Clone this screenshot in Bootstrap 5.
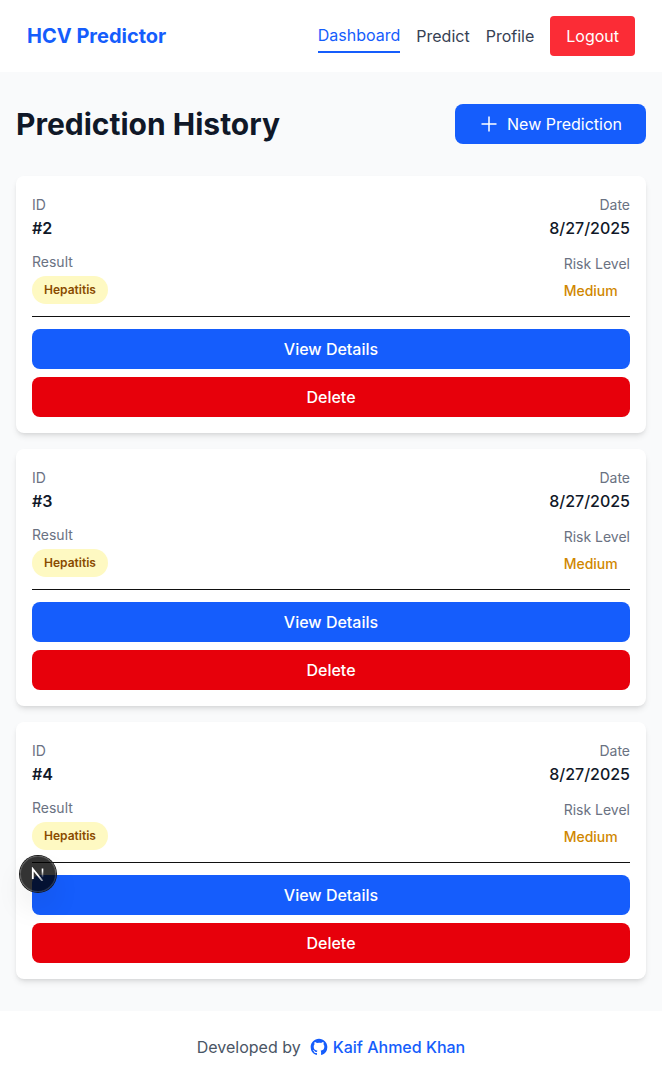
<!DOCTYPE html>
<html lang="en">
<head>
<meta charset="utf-8">
<meta name="viewport" content="width=device-width, initial-scale=1">
<title>HCV Predictor</title>
<link href="https://cdn.jsdelivr.net/npm/bootstrap@5.3.0/dist/css/bootstrap.min.css" rel="stylesheet">
<style>
  :root { --blue: #155dfc; --ink: #101828; --muted: #6a7282; --page: #f9fafb; }
  body { font-family: Inter, "Liberation Sans", sans-serif; font-size: 16px; line-height: 24px; color: var(--ink); background: var(--page); }
  .site-nav { padding: 16px 27px; }
  .brand { font-size: 20px; line-height: 28px; font-weight: 700; color: var(--blue); text-decoration: none; }
  .site-nav .nav-link { padding: 0; color: #364153; }
  .site-nav .nav-link.active { padding: 4px 0; color: var(--blue); border-bottom: 2px solid var(--blue); }
  .btn { --bs-btn-font-size: 16px; --bs-btn-line-height: 24px; --bs-btn-padding-y: 8px; --bs-btn-padding-x: 16px; --bs-btn-color: #fff; --bs-btn-hover-color: #fff; --bs-btn-border-radius: 8px; border: 0; }
  .btn-logout { --bs-btn-bg: #fb2c36; --bs-btn-hover-bg: #e7000b; --bs-btn-border-radius: 4px; }
  .btn-blue { --bs-btn-bg: #155dfc; --bs-btn-hover-bg: #1447e6; }
  .btn-red { --bs-btn-bg: #e7000b; --bs-btn-hover-bg: #c10007; }
  .btn-new { --bs-btn-padding-x: 24px; }
  .card .btn { font-weight: 500; }
  .page-title { font-size: 30px; line-height: 36px; font-weight: 700; }
  .page-main { padding: 32px 16px; }
  .card { border: 0; border-radius: 8px; box-shadow: 0 4px 6px -1px rgba(0,0,0,.1), 0 2px 4px -2px rgba(0,0,0,.1); color: var(--ink); }
  .stack-12 { gap: 12px; }
  .field-label { font-size: 14px; line-height: 20px; color: var(--muted); }
  .result-pill { font-size: 12px; line-height: 20px; font-weight: 600; padding: 4px 12px; background: #fef9c2; color: #894b00; }
  .risk { font-size: 14px; line-height: 20px; font-weight: 500; color: #d08700; }
  .card-actions { border-top: 1px solid #111; padding-top: 12px; }
  .site-footer { padding: 24px 16px; color: #4a5565; }
  .site-footer a { color: var(--blue); font-weight: 500; text-decoration: none; }
  .dev-badge { left: 20px; bottom: 119px; width: 36px; height: 36px; padding: 0; border: 0; color: #fff; background: rgba(0,0,0,.8);
    box-shadow: 0 0 0 1px #171717, inset 0 0 0 1px rgba(255,255,255,.14), 0 16px 32px -8px rgba(0,0,0,.24); }
</style>
</head>
<body>
<header class="bg-white">
  <nav class="site-nav d-flex align-items-center justify-content-between">
    <a class="brand" href="#">HCV Predictor</a>
    <div class="d-flex align-items-center gap-3">
      <a class="nav-link active" href="#" aria-current="page">Dashboard</a>
      <a class="nav-link" href="#">Predict</a>
      <a class="nav-link" href="#">Profile</a>
      <button type="button" class="btn btn-logout">Logout</button>
    </div>
  </nav>
</header>

<main class="page-main position-relative">
  <div class="d-flex align-items-center justify-content-between mb-4 pb-2">
    <h1 class="page-title mb-0">Prediction History</h1>
    <button type="button" class="btn btn-blue btn-new d-flex align-items-center gap-2">
      <svg width="20" height="20" viewBox="0 0 20 20" fill="none" stroke="currentColor" stroke-width="1.5" aria-hidden="true"><path d="M10 2.5v15M2.5 10h15"/></svg>
      New Prediction
    </button>
  </div>

  <div class="d-flex flex-column gap-3">
    <article class="card p-3 stack-12">
      <div class="d-flex justify-content-between">
        <div><div><span class="field-label">ID</span></div><div class="fw-semibold">#2</div></div>
        <div class="text-end"><div><span class="field-label">Date</span></div><div class="fw-medium">8/27/2025</div></div>
      </div>
      <div class="d-flex justify-content-between align-items-center">
        <div><div class="field-label mb-1">Result</div><div class="result-pill rounded-pill">Hepatitis</div></div>
        <div><div class="field-label mb-1">Risk Level</div><div><span class="risk">Medium</span></div></div>
      </div>
      <div class="card-actions d-grid gap-2">
        <button type="button" class="btn btn-blue">View Details</button>
        <button type="button" class="btn btn-red">Delete</button>
      </div>
    </article>

    <article class="card p-3 stack-12">
      <div class="d-flex justify-content-between">
        <div><div><span class="field-label">ID</span></div><div class="fw-semibold">#3</div></div>
        <div class="text-end"><div><span class="field-label">Date</span></div><div class="fw-medium">8/27/2025</div></div>
      </div>
      <div class="d-flex justify-content-between align-items-center">
        <div><div class="field-label mb-1">Result</div><div class="result-pill rounded-pill">Hepatitis</div></div>
        <div><div class="field-label mb-1">Risk Level</div><div><span class="risk">Medium</span></div></div>
      </div>
      <div class="card-actions d-grid gap-2">
        <button type="button" class="btn btn-blue">View Details</button>
        <button type="button" class="btn btn-red">Delete</button>
      </div>
    </article>

    <article class="card p-3 stack-12">
      <div class="d-flex justify-content-between">
        <div><div><span class="field-label">ID</span></div><div class="fw-semibold">#4</div></div>
        <div class="text-end"><div><span class="field-label">Date</span></div><div class="fw-medium">8/27/2025</div></div>
      </div>
      <div class="d-flex justify-content-between align-items-center">
        <div><div class="field-label mb-1">Result</div><div class="result-pill rounded-pill">Hepatitis</div></div>
        <div><div class="field-label mb-1">Risk Level</div><div><span class="risk">Medium</span></div></div>
      </div>
      <div class="card-actions d-grid gap-2">
        <button type="button" class="btn btn-blue">View Details</button>
        <button type="button" class="btn btn-red">Delete</button>
      </div>
    </article>
  </div>

  <button type="button" class="dev-badge position-absolute rounded-circle d-flex align-items-center justify-content-center" aria-label="Open developer tools">
    <svg width="14" height="14" viewBox="0 0 14 14" fill="none" aria-hidden="true">
      <defs>
        <linearGradient id="fadeDiag" x1="8" y1="8" x2="13" y2="14" gradientUnits="userSpaceOnUse"><stop stop-color="#fff"/><stop offset="1" stop-color="#fff" stop-opacity=".4"/></linearGradient>
        <linearGradient id="fadeBar" x1="0" y1="1" x2="0" y2="11" gradientUnits="userSpaceOnUse"><stop offset=".3" stop-color="#fff"/><stop offset="1" stop-color="#fff" stop-opacity="0"/></linearGradient>
      </defs>
      <path d="M1.8 12V2L11.5 14" stroke="url(#fadeDiag)" stroke-width="1.8"/>
      <path d="M11.5 1.5v9" stroke="url(#fadeBar)" stroke-width="1.6"/>
    </svg>
  </button>
</main>

<footer class="site-footer bg-white d-flex justify-content-center align-items-center gap-2">
  <span>Developed by</span>
  <a href="#" class="d-flex align-items-center gap-1">
    <svg width="20" height="20" viewBox="0 0 24 24" fill="currentColor" aria-hidden="true"><path d="M12 2C6.475 2 2 6.475 2 12a9.994 9.994 0 0 0 6.838 9.488c.5.087.687-.213.687-.476 0-.237-.013-1.024-.013-1.862-2.512.463-3.162-.612-3.362-1.175-.113-.288-.6-1.175-1.025-1.413-.35-.187-.85-.65-.013-.662.788-.013 1.35.725 1.538 1.025.9 1.512 2.338 1.087 2.912.825.088-.65.35-1.087.638-1.337-2.225-.25-4.55-1.113-4.55-4.938 0-1.088.387-1.987 1.025-2.688-.1-.25-.45-1.275.1-2.65 0 0 .837-.262 2.75 1.026a9.28 9.28 0 0 1 2.5-.338c.85 0 1.7.112 2.5.337 1.912-1.3 2.75-1.024 2.75-1.024.55 1.375.2 2.4.1 2.65.637.7 1.025 1.587 1.025 2.687 0 3.838-2.337 4.688-4.562 4.938.362.312.675.912.675 1.85 0 1.337-.013 2.412-.013 2.75 0 .262.188.574.688.474A10.016 10.016 0 0 0 22 12c0-5.525-4.475-10-10-10z"/></svg>
    Kaif Ahmed Khan
  </a>
</footer>
<script src="https://cdn.jsdelivr.net/npm/bootstrap@5.3.0/dist/js/bootstrap.bundle.min.js"></script>
</body>
</html>
